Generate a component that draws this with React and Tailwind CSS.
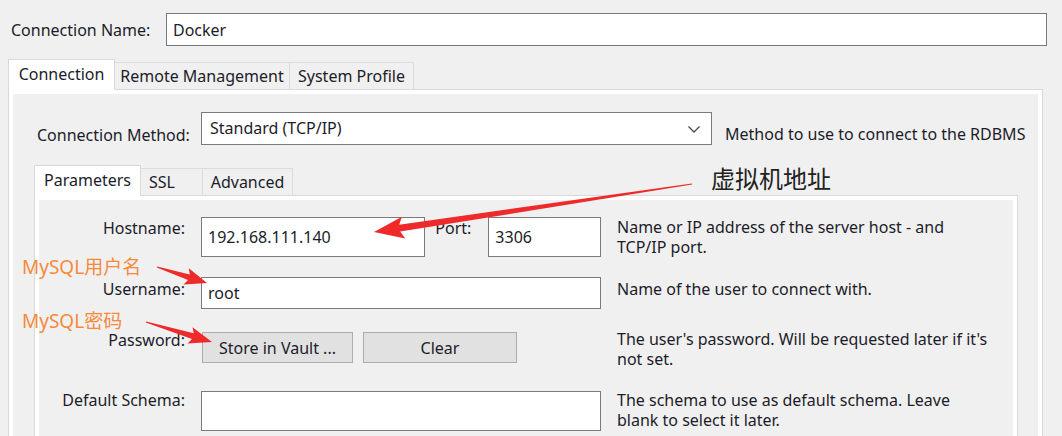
import React from "react";

function arrowPoints(tx, ty, px, py, headLen, headHalf, shaftHalf) {
  const dx = px - tx;
  const dy = py - ty;
  const len = Math.hypot(dx, dy);
  const ux = dx / len;
  const uy = dy / len;
  const nx = -uy;
  const ny = ux;
  const bx = px - ux * headLen;
  const by = py - uy * headLen;
  const bbx = px - ux * headLen * 1.15;
  const bby = py - uy * headLen * 1.15;
  const pts = [
    [tx + nx * 0.6, ty + ny * 0.6],
    [bx + nx * shaftHalf, by + ny * shaftHalf],
    [bbx + nx * headHalf, bby + ny * headHalf],
    [px, py],
    [bbx - nx * headHalf, bby - ny * headHalf],
    [bx - nx * shaftHalf, by - ny * shaftHalf],
    [tx - nx * 0.6, ty - ny * 0.6],
  ];
  return pts.map((p) => p[0].toFixed(1) + "," + p[1].toFixed(1)).join(" ");
}

function Tab({ selected, children, className = "" }) {
  if (selected) {
    return (
      <div
        className={
          "h-[31px] bg-white border border-[#d9d9d9] border-b-0 flex items-center justify-center relative z-10 -mb-px " +
          className
        }
      >
        {children}
      </div>
    );
  }
  return (
    <div
      className={
        "h-[27px] bg-[#f0f0f0] border border-[#dcdcdc] border-b-0 border-l-0 flex items-center justify-center " +
        className
      }
    >
      {children}
    </div>
  );
}

function Input({ className = "", children }) {
  return (
    <div
      className={
        "bg-white border border-[#7a7a7a] flex items-center pl-[6px] " + className
      }
    >
      {children}
    </div>
  );
}

function Button({ className = "", children }) {
  return (
    <div
      className={
        "bg-[#e1e1e1] border border-[#adadad] flex items-center justify-center " +
        className
      }
    >
      {children}
    </div>
  );
}

export default function App() {
  return (
    <div className="relative w-[1062px] h-[436px] overflow-hidden bg-[#f0f0f0] text-[16px] leading-[20px] text-[#1c1c2a] font-['Noto_Sans','Open_Sans',sans-serif]">
      {/* Connection Name */}
      <div className="flex items-center pt-[13px] pr-[15px]">
        <span className="w-[166px] pl-[11px]">Connection Name:</span>
        <Input className="flex-1 h-[33px]">Docker</Input>
      </div>

      {/* Outer tabs */}
      <div className="mt-[12px] ml-[8px] mr-[19px]">
        <div className="flex items-end h-[31px]">
          <Tab selected className="w-[107px] pb-[2px]">
            Connection
          </Tab>
          <Tab className="w-[175px]">Remote Management</Tab>
          <Tab className="w-[124px]">System Profile</Tab>
        </div>
        <div className="border border-[#d9d9d9] bg-white p-[4px]">
          <div className="bg-[#f0f0f0] h-[360px] pt-[18px]">
            {/* Connection method */}
            <div className="flex items-start">
              <span className="w-[188px] pl-[24px] pt-[13px]">Connection Method:</span>
              <div className="w-[511px] h-[33px] bg-white border border-[#7a7a7a] flex items-center justify-between pl-[8px] pr-[10px]">
                <span className="-mt-[2px]">Standard (TCP/IP)</span>
                <svg width="14" height="10" viewBox="0 0 14 10" className="mt-[1px]">
                  <path d="M1.5 2.5 L7 8 L12.5 2.5" fill="none" stroke="#4a4a4a" strokeWidth="1.3" />
                </svg>
              </div>
              <span className="ml-[13px] pt-[12px]">Method to use to connect to the RDBMS</span>
            </div>

            {/* Inner tabs */}
            <div className="mt-[19px] ml-[21px] mr-[20px]">
              <div className="flex items-end h-[31px]">
                <Tab selected className="w-[107px] pb-[3px]">
                  Parameters
                </Tab>
                <Tab className="w-[62px] justify-start pl-[8px]">SSL</Tab>
                <Tab className="w-[90px]">Advanced</Tab>
              </div>
              <div className="border border-[#d9d9d9] bg-white p-[4px]">
                <div className="bg-[#f0f0f0] h-[300px] pt-[17px]">
                  <div className="grid grid-cols-[146px_400px_1fr] gap-x-[16px] gap-y-[20px] items-start">
                    {/* Hostname */}
                    <div className="text-right pt-[1px]">Hostname:</div>
                    <div className="flex items-start">
                      <Input className="w-[225px] h-[40px]">192.168.111.140</Input>
                      <span className="ml-[10px] pt-[1px]">Port:</span>
                      <Input className="ml-[17px] w-[113px] h-[40px]">3306</Input>
                    </div>
                    <div className="leading-[20px]">
                      Name or IP address of the server host - and
                      <br />
                      TCP/IP port.
                    </div>

                    {/* Username */}
                    <div className="text-right pt-[2px]">Username:</div>
                    <Input className="w-[400px] h-[32px]">root</Input>
                    <div className="pt-[2px]">Name of the user to connect with.</div>

                    {/* Password */}
                    <div className="text-right mt-[1px]">Password:</div>
                    <div className="flex items-start gap-[10px] pt-[3px]">
                      <Button className="w-[151px] h-[31px] ml-[1px]">Store in Vault ...</Button>
                      <Button className="w-[154px] h-[31px]">Clear</Button>
                    </div>
                    <div className="leading-[20px]">
                      The user's password. Will be requested later if it's
                      <br />
                      not set.
                    </div>

                    {/* Default Schema */}
                    <div className="text-right mt-[1px]">Default Schema:</div>
                    <Input className="w-[400px] h-[40px] mt-[2px]"></Input>
                    <div className="leading-[20px] mt-[1px]">
                      The schema to use as default schema. Leave
                      <br />
                      blank to select it later.
                    </div>
                  </div>
                </div>
              </div>
            </div>
          </div>
        </div>
      </div>

      {/* Annotations (overlay) */}
      <span className="absolute left-[711px] top-[163px] text-[24px] leading-[30px] text-[#222] font-['Noto_Sans_CJK_SC',sans-serif]">
        虚拟机地址
      </span>
      <span className="absolute left-[22px] top-[255px] text-[19px] leading-[24px] text-[#f7893b] font-['Noto_Sans','Noto_Sans_CJK_SC',sans-serif]">
        MySQL用户名
      </span>
      <span className="absolute left-[22px] top-[309px] text-[19px] leading-[24px] text-[#f7893b] font-['Noto_Sans','Noto_Sans_CJK_SC',sans-serif]">
        MySQL密码
      </span>
      <svg
        className="absolute left-0 top-0 pointer-events-none"
        width="1062"
        height="436"
        viewBox="0 0 1062 436"
      >
        <polygon points={arrowPoints(692, 184, 374, 232, 26, 11, 3.5)} fill="#ee2a2a" />
        <polygon points={arrowPoints(157, 267, 207, 283, 19, 8.5, 3)} fill="#ee2a2a" />
        <polygon points={arrowPoints(146, 322, 212, 342, 20, 8.5, 3)} fill="#ee2a2a" />
      </svg>
    </div>
  );
}
